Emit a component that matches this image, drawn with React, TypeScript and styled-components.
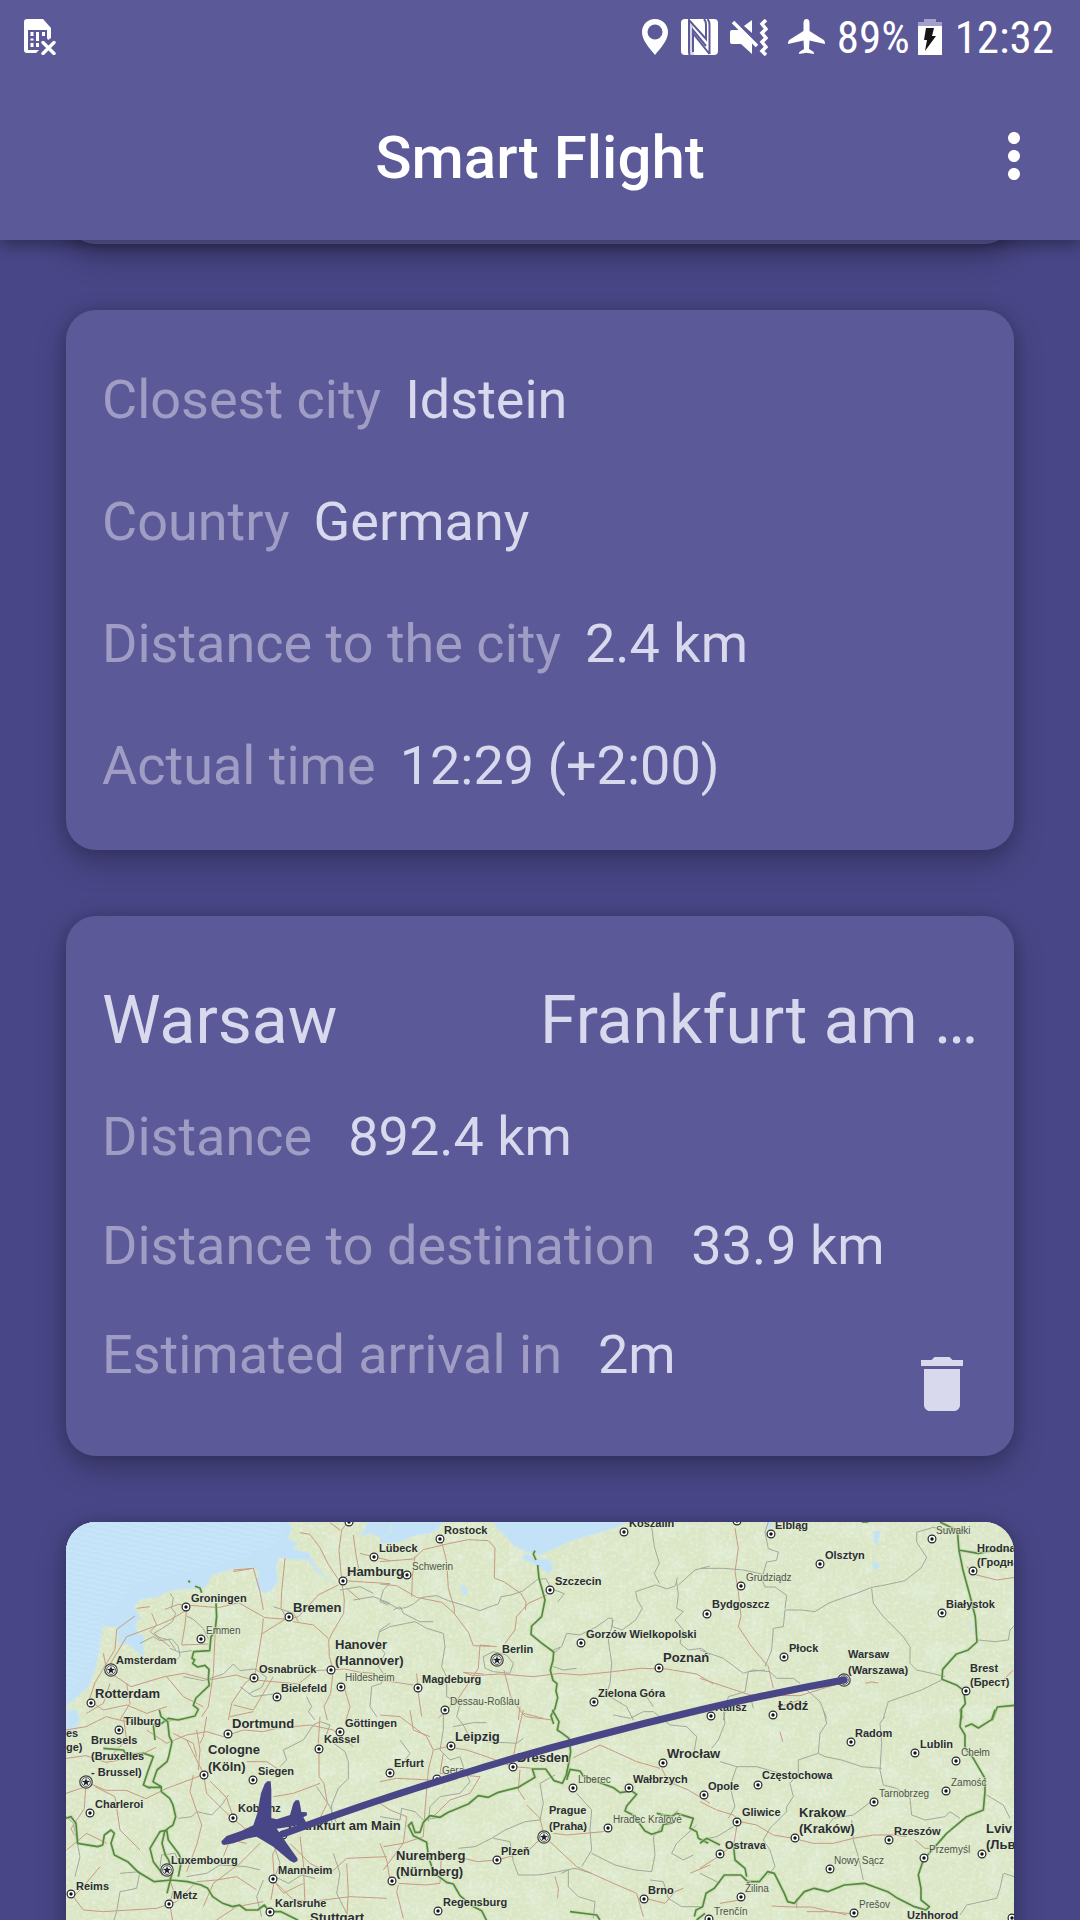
import React from 'react';
import styled, { createGlobalStyle } from 'styled-components';

const GlobalStyle = createGlobalStyle`
  *, *::before, *::after { box-sizing: border-box; }
  body {
    margin: 0;
    background: #484686;
    font-family: Roboto, 'Noto Sans', sans-serif;
  }
`;

const Screen = styled.div`
  display: flex;
  flex-direction: column;
  height: 100vh;
  overflow: hidden;
  background: #484686;
`;

const Header = styled.header`
  position: relative;
  z-index: 1;
  flex: none;
  background: #5c5999;
  color: #fff;
  box-shadow: 0 4px 16px rgba(0, 0, 0, 0.4);
`;

const StatusBar = styled.div`
  display: flex;
  align-items: center;
  justify-content: space-between;
  height: 72px;
  padding: 2px 26px 0 24px;
`;

const StatusGroup = styled.div`
  display: flex;
  align-items: center;
`;

const StatusIcon = styled.svg<{ $gap?: number }>`
  display: block;
  flex: none;
  margin-right: ${(p) => p.$gap ?? 0}px;
`;

const StatusText = styled.span<{ $gap?: number }>`
  padding-top: 2px;
  font-family: 'Roboto Condensed', 'Liberation Sans Narrow', Roboto, sans-serif;
  font-size: 45px;
  line-height: 70px;
  margin-right: ${(p) => p.$gap ?? 0}px;
`;

const AppBar = styled.div`
  display: grid;
  grid-template-columns: 72px 1fr 72px;
  align-items: center;
  height: 168px;
  padding: 0 30px;
`;

const Title = styled.h1`
  grid-column: 2;
  margin: 0;
  padding-top: 4px;
  font-size: 60px;
  font-weight: 500;
  line-height: 72px;
  text-align: center;
`;

const IconButton = styled.button`
  display: block;
  flex: none;
  width: 72px;
  height: 72px;
  padding: 0;
  border: 0;
  background: none;
  color: inherit;
  cursor: pointer;

  svg {
    display: block;
    width: 100%;
    height: 100%;
    fill: currentColor;
  }
`;

const Content = styled.main`
  display: flex;
  flex: 1;
  flex-direction: column;
  gap: 66px;
  min-height: 0;
  padding: 0 66px;
  overflow: hidden;
`;

const Card = styled.section`
  flex: none;
  border-radius: 30px;
  background: #5c5999;
  color: #d9d9ee;
  box-shadow: 0 12px 30px rgba(0, 0, 0, 0.26), 0 0 14px rgba(0, 0, 0, 0.14);
`;

const ScrolledCard = styled(Card)`
  height: 64px;
  margin-top: -60px;
`;

const PlaceCard = styled(Card)`
  padding: 29px 36px 23px;
`;

const FlightCard = styled(Card)`
  padding: 44px 36px 36px;
`;

const Facts = styled.dl`
  flex: 1;
  min-width: 0;
  margin: 0;
  font-size: 54px;
`;

const Fact = styled.div<{ $height: number; $gap: number }>`
  display: flex;
  gap: ${(p) => p.$gap}px;
  line-height: ${(p) => p.$height}px;
  white-space: nowrap;
`;

const Label = styled.dt`
  color: #a09dc5;
`;

const Value = styled.dd`
  margin: 0;
`;

const Route = styled.h2`
  display: flex;
  margin: 0;
  font-size: 66px;
  font-weight: 400;
  line-height: 122px;
`;

const City = styled.span`
  flex: 1;
  min-width: 0;
  white-space: nowrap;
`;

const FlightBody = styled.div`
  display: flex;
  align-items: flex-end;

  dl {
    padding-bottom: 11px;
  }
`;

const MapCard = styled(Card)`
  height: 540px;
  overflow: hidden;
  background: #dce7c4;
`;

const MapDrawing = styled.svg`
  display: block;
  width: 100%;
  font-family: 'Liberation Sans', Arial, sans-serif;
`;

type Size = 'sm' | 'md' | 'lg' | 'cap';

const MapLabel = styled.text<{ $size: Size }>`
  font-size: ${(p) => ({ sm: 10, md: 11, lg: 13, cap: 11 })[p.$size]}px;
  font-weight: ${(p) => (p.$size === 'sm' ? 400 : 700)};
  fill: ${(p) => (p.$size === 'sm' ? '#4e534b' : '#2b2e33')};
  stroke: rgba(226, 236, 206, 0.6);
  stroke-width: 2px;
  paint-order: stroke;
`;

// [size, marker x, marker y, then label x, label baseline, text ...]
type Place = [Size, number | null, number, ...Array<[number, number, string]>];

const places: Place[] = [
  ['md', 120, 85, [125, 80, 'Groningen']],
  ['sm', 135, 117, [140, 112, 'Emmen']],
  ['cap', 45, 148, [50, 142, 'Amsterdam']],
  ['lg', 25, 181, [29, 176, 'Rotterdam']],
  ['lg', 223, 95, [227, 90, 'Bremen']],
  ['md', 283, 0],
  ['md', 308, 35, [313, 30, 'Lübeck']],
  ['lg', 265, 148, [269, 127, 'Hanover'], [269, 143, '(Hannover)']],
  ['sm', 275, 165, [279, 159, 'Hildesheim']],
  ['md', 188, 156, [193, 151, 'Osnabrück']],
  ['md', 211, 175, [215, 170, 'Bielefeld']],
  ['md', 374, 17, [378, 12, 'Rostock']],
  ['lg', 277, 59, [281, 54, 'Hamburg']],
  ['sm', 341, 53, [346, 48, 'Schwerin']],
  ['md', 558, 10, [563, 5, 'Koszalin']],
  ['md', 484, 68, [489, 63, 'Szczecin']],
  ['md', 515, 121, [520, 116, 'Gorzów Wielkopolski']],
  ['cap', 431, 138, [436, 131, 'Berlin']],
  ['lg', 593, 146, [597, 140, 'Poznań']],
  ['md', 352, 166, [356, 161, 'Magdeburg']],
  ['md', 528, 180, [532, 175, 'Zielona Góra']],
  ['sm', 379, 188, [384, 183, 'Dessau-Roßlau']],
  ['md', 705, 12, [709, 7, 'Elbląg']],
  ['md', 671, -1],
  ['md', 754, 42, [759, 37, 'Olsztyn']],
  ['sm', 866, 17, [870, 12, 'Suwałki']],
  ['md', 907, 49, [911, 30, 'Hrodna'], [911, 44, '(Гродна)']],
  ['sm', 675, 64, [680, 59, 'Grudziądz']],
  ['md', 641, 92, [646, 86, 'Bydgoszcz']],
  ['md', 876, 91, [880, 86, 'Białystok']],
  ['md', 718, 135, [723, 130, 'Płock']],
  ['cap', 778, 158, [782, 136, 'Warsaw'], [782, 152, '(Warszawa)']],
  ['md', 900, 169, [904, 150, 'Brest'], [904, 164, '(Брест)']],
  ['md', 645, 194, [649, 189, 'Kalisz']],
  ['lg', 707, 193, [712, 188, 'Łódź']],
  ['md', 53, 208, [58, 203, 'Tilburg']],
  ['md', null, 0, [0, 215, 'es'], [0, 229, 'ge)']],
  ['cap', 20, 260, [25, 222, 'Brussels'], [25, 238, '(Bruxelles'], [25, 254, '- Brussel)']],
  ['lg', 162, 212, [166, 206, 'Dortmund']],
  ['lg', 138, 253, [142, 232, 'Cologne'], [142, 249, '(Köln)']],
  ['md', 187, 258, [192, 253, 'Siegen']],
  ['md', 274, 210, [279, 205, 'Göttingen']],
  ['md', 253, 227, [258, 221, 'Kassel']],
  ['md', 24, 291, [29, 286, 'Charleroi']],
  ['md', 167, 296, [172, 290, 'Koblenz']],
  ['lg', 217, 313, [222, 308, 'Frankfurt am Main']],
  ['cap', 101, 348, [105, 342, 'Luxembourg']],
  ['md', 5, 372, [10, 368, 'Reims']],
  ['md', 103, 382, [107, 377, 'Metz']],
  ['md', 207, 357, [212, 352, 'Mannheim']],
  ['md', 204, 390, [209, 385, 'Karlsruhe']],
  ['lg', null, 0, [244, 400, 'Stuttgart']],
  ['md', 324, 251, [328, 245, 'Erfurt']],
  ['lg', 326, 359, [330, 338, 'Nuremberg'], [330, 354, '(Nürnberg)']],
  ['lg', 385, 224, [389, 219, 'Leipzig']],
  ['sm', 371, 257, [376, 252, 'Gera']],
  ['lg', 447, 245, [451, 240, 'Dresden']],
  ['sm', 507, 266, [512, 261, 'Liberec']],
  ['md', 563, 266, [567, 261, 'Wałbrzych']],
  ['lg', 597, 241, [601, 236, 'Wrocław']],
  ['cap', 478, 315, [483, 292, 'Prague'], [483, 308, '(Praha)']],
  ['sm', 542, 306, [547, 301, 'Hradec Králové']],
  ['md', 431, 338, [435, 333, 'Plzeň']],
  ['md', 578, 377, [582, 372, 'Brno']],
  ['md', 372, 389, [377, 384, 'Regensburg']],
  ['md', 638, 273, [642, 268, 'Opole']],
  ['md', 785, 220, [789, 215, 'Radom']],
  ['md', 849, 231, [854, 226, 'Lublin']],
  ['sm', 890, 239, [895, 234, 'Chełm']],
  ['md', 692, 263, [696, 257, 'Częstochowa']],
  ['sm', 808, 280, [813, 275, 'Tarnobrzeg']],
  ['sm', 880, 269, [885, 264, 'Zamość']],
  ['md', 671, 300, [676, 294, 'Gliwice']],
  ['lg', 729, 316, [733, 295, 'Krakow'], [733, 311, '(Kraków)']],
  ['md', 823, 318, [828, 313, 'Rzeszów']],
  ['md', 654, 332, [659, 327, 'Ostrava']],
  ['sm', 858, 336, [863, 331, 'Przemyśl']],
  ['lg', 916, 332, [920, 311, 'Lviv'], [920, 327, '(Львів)']],
  ['sm', 764, 347, [768, 342, 'Nowy Sącz']],
  ['sm', 675, 375, [679, 370, 'Žilina']],
  ['sm', 643, 397, [648, 393, 'Trenčín']],
  ['sm', 788, 391, [793, 386, 'Prešov']],
  ['md', 946, 396, [841, 397, 'Uzhhorod']],
];

// The map lines come in six tiles, drawn at three units to the pixel.
type Tile = { x: number; y: number; sea?: string; region: string; road: string; border: string };

const tiles: Tile[] = [
  {
    x: -18, y: -36,
    sea: 'M0 0H670L695 55 685 85 712 100 700 118 745 128 765 165 790 195 815 215 770 185 745 150 700 148 655 142 648 180 655 210 640 235 615 250 595 240 590 215 597 185 575 172 515 178 455 195 440 225 425 240 400 235 330 242 290 262 240 268 222 290 240 322 225 345 235 370 252 378 250 440 205 402 178 402 170 350 125 350 118 410 108 470 85 530 18 590 0 600ZM900 80L925 36 990 36 990 95 960 80 930 70Z M18 600L60 640 18 680Z',
    region: 'M330 250l10 15-5 30 12 15-10 25-30 20-25 15 15 12 30 8 20 30M380 318l20 10 30 28 15 30M330 415l30 12 35-5M240 400l40-20 20 12 35-5 20 22 5 30-20 20M370 500l60 12 60-20 30-30 20 20 45-5 35 25-15 30-40 20M640 290l60 20 15 25M990 220l-20 20-10 35 25 10M840 240l60-10 40 20M740 560l15 30-10 15 20 25M990 340l-30 20-10 40 25 30-20 40 15 20-5 30-30 10-5 60 20 30M540 530l40 30 60-8M880 270l60-10 50 20',
    road: 'M845 60l-8 60 8 90 8 60-2 40-35 60-10 20 2 50 12 40-8 70-20 40 10 40M720 68l30 5 30 40 25 50 30 45M880 75l8 60 8 40-45 30M900 130l40 10 50 12M865 213l125 8M835 225l-60 30-60 65-30 8-70-5-80-45-60 15-120-10-40 15M610 325l-5 50-20 120-30 25-40 60-10 50M685 322l-80 50M700 335l60 10 45 40M860 235l40 35M675 145l-10 100-2 50 15 25M520 185l60-10 20 70 10 55M470 290l-5 90-5 110-15 100-20 30M380 295l-5 50-10 60 80-3M230 295l40-5M275 310l15 35-20 20 60 45M130 430l10 50 60-100 95-35 35-15 50-30M225 318l-55 40-5 60-30 50-30 50-20 60M153 490l60 40 100-30 60-10 75 20 80-15 50 15M585 510l130 12 50-40 90-5 45 10 45 3M100 580l30 20 70-15 60 25 60-20M320 500l50 60 60 30M200 520l10 60-30 50M520 180l60-5M840 60l-30-22M845 60l20-25M640 500l-60 100-60-15M855 540l15 50-15 50M150 520l-20 60-50 30',
    border: 'M385 212l5 5M405 229l15 5 5 14M468 280l2 40-5 45-12 15-4 42-48 3-5 20 8 4-6 12 15 10 22-5 12 12-2 30 3 18-40 38-8 22 15 12-10 20-50 12-30-5-20 15-25 5 5 45',
  },
  {
    x: 942, y: -36,
    sea: 'M35 36H190L170 60 150 70 110 75 60 95 20 100 0 100V85L30 70ZM340 36L355 60 375 75 400 105 440 125 480 135 580 90 700 55 745 36ZM425 145L440 130 465 145 510 150 520 175 505 190 470 165ZM240 225L255 230 265 250 250 255Z',
    region: 'M0 270l35 15 20 12 25-5 20-10 25-20 45-5 35 15 50 15 45 15 25-10 30-10 8-22 30-5 35-12 45-35 25-2 15 30 40 15-20 25M0 365l30-15 50-10 25-5 35 20 50 15 5 40-10 60 15 30 0 60 40 20-10 40 20 25 15 30M40 300l20-10 10 20 50 25 40 0M310 440l30-15 40 10 20 25-10 30-50-5-25-10zM520 420l25-10 15-40 40 5 50-25 35-25 12 0 0 25 30 10 40-30 20-35-15-25-5-25 60-20 35 12 25-10 5-25M815 50l8 60 15 50-15 30 15 30M890 215l5 40-5 40 20 10-25 25 25 30-10 40 25 20 40-5 25 20M895 225l50-45 45-12M540 415l-20 15M700 330l-15 60 10 70-5 60-10 30M690 560l50 30 20 40M520 470l30 10 40-5M800 560l20 30',
    road: 'M0 155l100-8 30-28 75-18 60-12 60 3 20 22-2 90 30 12 50 35 15 25-2 25M185 95l15 60 5 80 18 60 0 15M0 222l50 5 60 35 75 15 35 30 45 60 15 40 50 2M300 405l50 5M105 140l-8 60-2 60M375 400l30-40 5-40 35-40 55-25M300 405l-5 70-60 90-60 60M250 487l30 10 80-5 100 8 80-10 60 5 100-10 80-10 80 2 90 15 50 30M372 480l20 80 35 50 10 10 80 10M110 490l5 60 10 70M0 510l100 15M250 487l60 5M420 590l-5 40',
    border: 'M465 122l-5 10 8 18M473 165l4 40 10 35 8 30-10 50-30 28-2 25 30 25 38 28-2 25-8 30 8 30 12 10-3 22 5 20-8 32-12 22 8 25',
  },
  {
    x: 1902, y: -36,
    sea: 'M195 36H225L210 55ZM520 65L540 62 535 95 525 105ZM515 160L530 155 540 170 525 180ZM800 345L820 350 825 360Z',
    region: 'M205 36l-10 30 10 50 30 10-5 25-30 5-15 50 10 25 30 0 35 25-5 40M0 175l70 0 60 5 55 12M255 300l50 0 40 5 40-25 40-15 45-15 45-18 30-5 70-15 50-40 15-30-30-45 0-30 50-15 45 10M515 235l5 45 30 40 60 60 20 30 0 50 20 20 45 10 40 10M255 300l-5 50-30 5-5 65-20 50M0 420l70 25 60 45 30-10 50 5 20 20 50 0 20 15M195 480l-50 5-10 60-50 15-15 70M320 540l40 35 20 50M725 510l-60 30-100 35-15 50M835 390l50 5 40-5 5-30 20-20',
    road: 'M105 55l10 60-10 70 10 60 8 75-8 30 40 60 50 60 15 65M0 505l90 30 60 20 150 2 80-25 70-20M240 590l60-20M495 520l20-4 20 3M800 170l30 25 60 15 55-8M890 530l50-50M150 555l10 40',
    border: 'M720 36l30 15 22 10 5 60 12 60 22 80 15 60 5 75-28 25-35 12-40 45-2 30 45 18 20 15 5 40-15 20 5 20-5 10M775 120l60 10 40-8 60-2M485 36h20M942 586l-50 5-15 40',
  },
  {
    x: -18, y: 564,
    sea: 'M18 0H50L60 30 30 60 18 75Z',
    region: 'M0 300l40 40 20 100-15 60M355 325l40-5 15-15 45 10 30-30 20-30M660 170l20-20-10-30 60-30 30-45 20-10 30 10-15 40 20 10 40 30 10 30 0 50-30 30-20 50 0 60M180 490l60-5-10 50-50 10-10 60-10 30M640 400l20 60-15 40 40 20 40-25 40 10M300 470l5-35 40-5 15 35M380 500l60-10 40-25 80 5 40 10M770 230l40 60 20 50M610 510l-20 50 15 60M820 430l20 60-10 60 30 60',
    road: 'M18 60l60-10 60-30 60 15 70 10 100-20M18 145l60-8 60 20 90-15 60-30M78 216l-5 80-40 60 10 20M78 216l60 25 60 0 60 25 60-30 80-30 50-20M18 250l60-20M340 70l60 30 10 40M320 100l60-25 60-10 50 15 60-20 60 5 40-10 100-10 70 15 60 50M380 90l20 40 30 60 10 60 60 60 60 50M410 60l10 60-5 60M400 195l-10 50 35 100-15 60-30 80M520 323l-20-60-50-50M560 155l60 0 60 40M777 130l0 70 15 20 10 60-30 60M640 260l60-10 80-30M668 374l-30 60 5 75-10 60M240 420l-60-60-15-100-60-30M120 470l-50 60-30 30 30 40 60 5 160-10 60-20 60-60 60-5 60-10 60 40M330 585l10 60M320 480l20 60-10 40M140 150l60-60-10-70M320 100l-60-40M20 420l60-50 60 30M640 510l60 60 50 5 120-15 110 5M690 400l60 60 60 30 50-45 120-5M720 380l10 80 5 120M860 460l5 90-5 80M640 510l30 40 60-30M600 400l-60 60-80 60-30 70M470 630l60-40 80-15M780 20l-5 80M510 20l70-15M440 20l-10 60-10 20M560 400l-50-10-20 50',
    border: 'M298 0l5 20 20 15 5 45 8 15-10 45-5 15-30 25-12 35 25 15 0 15 25 20 10 20 8 35-8 25-15 10-10 10-8 35 10 35 10 15 10 40-15 60M270 235l-20-10 15-45 15-40-30-10-50 5-10-15-60-5M265 232h40M18 325l15-5 15 20 5 60 60 10 15-5 5-30 20-15 10 10-10 30 10 35 40 20 30 30 50 30 50-5 50 5 40 10 20 10 15 25 30 20 30 10 20-5 20 15 35 0 20-15 15 20 35 0 50 25-10 35M320 360l-20 5-30 50 10 40 30 40M320 360l5 30 30 40 10 20-10 50',
  },
  {
    x: 942, y: 564,
    region: 'M190 0l0 60-10 60 30 30 30-10 15 45 15 30-30 35-60 10-30 30-5 45M220 50l60-12 40 0M320 95l90 5 20-15M700 15l50 10 40-20 30 0 50 40 50 5 30 30-10 60M0 320l60 10 5-35 40 10 25 25 60-10M235 415l50-5 50-25 40-25 60-25 45-5 10-50-10-60 45-25M340 385l50 10 10 60 15 40 60 0 60-10 50-10 50 15M590 250l45 50-5 60 5 60-30 50M635 430l70 35 60 15 50 5 10-50-5-55 45-55 30-25M545 490l20-10 0 50 30 30 50 15-5 50M810 510l40 5 15 50 40 25 60 0M950 345l-60 55-15 30 35 20 30-15M870 230l20-20M70 500l40-30M60 90l30 40-15 20',
    road: 'M0 15l60 5 80 60 20 40 40-10 60 10 60 20 80 30 60 5M160 120l-15 60-10 120-5 80-60 20-60 10M190 130l-10 60 120 10-30 50-60 20-50 50M0 215l50-10 100 5M90 0l10 60 50 20M430 0l-10 40-20 100M430 10l60 15M420 180l-5 60 20 30M440 285l40 40 12 50-50 50-90 25-60 5-40-10M510 395l80 75 110 50 70 30 20 70M520 370l40 5 110-10 15-10M840 175l-70-20-110-50-80 38M845 175l20 40 60 25 65 40M525 500l10 35-2 30M55 525l-5 20 20 80M55 520l80 5 45-5 5-100M30 510l-10-60-20-50M0 280l30 20 50 20-10 80-60 80M795 565l60 15 30-35 25-10M930 490l60-25',
    border: 'M517 0l20 35-5 25 15 10 20 15 5 40-5 30-8 40-12 25-25-8-25-35-40 0 8 25-50 30-60 15-30 15-30-5-30 25-60 25-25 15-30-5-20 20-10 30-15 0-10-30-10 10 15 30 40 20 5 40 15 50 40 30 20 5 20 35 35 30 30 15 15 30M560 210l10-32 30 5 10 15 50 20 40 15 20 15 35-5 15 10-30 35-5 15 30 15 15 25 15 20 20 10 30-10 5-20 30-5M830 310l45 10 15-10 50 15-10 30 20 10 5 20 30 15M570 605l80 10 10 15M950 630l25-20',
  },
  {
    x: 1902, y: 564,
    region: 'M70 0l5 40-20 50-20 25M370 0l10 40-20 30-5 60 20 10 50 10 60 20 60 5M555 20l-15 20 5 60-5 80 10 45 40 10 40 30 5 50 40 15 60-10 15-15 30 20M355 130l-60 20 0 40-25 30 10 40-20 30 0 15-50 50-20 35 20 30 15 50-20 25M110 170l-20 60 15 60-20 35M60 155l50 15 60 0 70 20 30 15M520 270l-60 45-60 10-15 20-45 15M455 330l5 60 15 50 15 70M860 255l50 30 20 40M910 490l-10 45-10 30-90 20-20 30M0 390l50-10 50-30M0 490l60 30M290 565l0 30M942 500l-30-10',
    road: 'M0 275l50 25 50 15 20 20 50 10 50 30 60 10 60 15 60 0 60-15 60-10 60 0 40 5M112 340l-10 60-40 35-62 40M240 65l8 30M645 390l30 25 20 0M215 588l60 3 60 0 60 15 60 5M60 580l60-10M320 605l80 0 40 10',
    border: 'M785 0l-5 50 15 25 0 40 25 30 35 60 0 40-5 55-50 20-60 50-70 80-15 45 8 40 0 35 25 20-10 10-35-10-50-25-30-20-70-25-60 5-50 20-40-10-30 10-30 35-20-5-10-25-30-60-20-5-25 30-35 0-20-20-50 0-30 40-25 15-10 40-20 10-5 20M795 50l20-8 20 12 40-25 10-30M942 0M140 500l-5-25-30-25-5-50M0 400l20-15 40 20',
  },
];

function MapMarker({ x, y, capital }: { x: number; y: number; capital: boolean }) {
  if (capital) {
    return (
      <g transform={`translate(${x} ${y})`}>
        <circle r="6.200" fill="#e9ecdd" stroke="#3f4240" strokeWidth="1.200" />
        <circle r="4.400" fill="#f4f5ef" stroke="#3f4240" strokeWidth=".8" />
        <path d="M0-4l1 2.800 3 .1-2.400 1.800.9 2.800L0 1.900l-2.500 1.600.9-2.800L-4-1.100l3-.1z" fill="#1d222b" />
      </g>
    );
  }
  return (
    <g transform={`translate(${x} ${y})`}>
      <circle r="3.900" fill="#fff" stroke="#25282b" strokeWidth="1.200" />
      <circle r="1.700" fill="#111" />
    </g>
  );
}

function FlightMap() {
  return (
    <MapDrawing viewBox="0 0 948 540" role="img" aria-label="Flight route from Warsaw to Frankfurt am Main">
      <defs>
        <filter id="forest" x="0" y="0" width="100%" height="100%">
          <feTurbulence type="fractalNoise" baseFrequency=".05" numOctaves="5" seed="8" />
          <feColorMatrix values="0 0 0 0 .76  0 0 0 0 .86  0 0 0 0 .71  4 0 0 0 -1.900" />
        </filter>
        <filter id="meadow" x="0" y="0" width="100%" height="100%">
          <feTurbulence type="fractalNoise" baseFrequency=".3" numOctaves="2" seed="3" />
          <feColorMatrix values="0 0 0 0 .91  0 0 0 0 .93  0 0 0 0 .80  0 3 0 0 -1.300" />
        </filter>
        <pattern id="waves" width="12" height="5" patternUnits="userSpaceOnUse" patternTransform="rotate(12)">
          <rect width="12" height="5" fill="#c3e2f8" />
          <path d="M0 2q3-1.500 6 0t6 0" fill="none" stroke="#d8edfb" strokeWidth="1" />
        </pattern>
      </defs>
      <rect width="948" height="540" fill="#dae6c5" />
      <rect width="948" height="540" filter="url(#forest)" opacity=".5" />
      <rect width="948" height="540" filter="url(#meadow)" opacity=".4" />
      <g transform="scale(.33333)" fill="none" strokeLinejoin="round">
        {tiles.map((t, i) => (
          <g key={i} transform={`translate(${t.x} ${t.y})`}>
            {t.sea && <path d={t.sea} fill="#c3e2f8" stroke="#cfe6e6" strokeWidth="4" />}
            <path d={t.region} stroke="#a1a89c" strokeWidth="3" />
            <path d={t.road} stroke="#c79a84" strokeWidth="3" />
          </g>
        ))}
        {tiles.map((t, i) => (
          <g key={i} transform={`translate(${t.x} ${t.y})`}>
            <path d={t.border} stroke="#bcd6a4" strokeWidth="11" opacity=".5" />
            <path d={t.border} stroke="#55893f" strokeWidth="5" />
          </g>
        ))}
      </g>
      <path d="M0 0H215V20L160 42 70 60 40 90 34 130 0 175Z" fill="url(#waves)" opacity=".5" />
      {places.map(([size, x, y, ...labels], i) => (
        <g key={i}>
          {x !== null && <MapMarker x={x} y={y} capital={size === 'cap'} />}
          {labels.map(([lx, ly, text]) => (
            <MapLabel key={text} x={lx} y={ly} $size={size}>
              {text}
            </MapLabel>
          ))}
        </g>
      ))}
      <path
        d="M778 158Q706 171 634 188Q578 201 522 216Q460 232 399 251Q306 279 217 312"
        fill="none"
        stroke="#484686"
        strokeWidth="7"
        strokeLinecap="round"
      />
      <path
        transform="translate(-6 188) scale(.33333)"
        fill="#484686"
        d="M484 394L500 378 545 362 580 346 592 310 603 250 614 222 622 214 632 214 634 240 634 324 650 328 690 315 700 280 707 271 717 271 720 282 724 306 740 307 741 316 730 322 738 336 742 345 732 348 722 342 690 350 650 356 660 370 680 400 712 445 713 452 702 458 690 452 640 410 590 380 560 386 520 400 492 405 486 402Z"
      />
    </MapDrawing>
  );
}

const placeFacts: Array<[string, string]> = [
  ['Closest city', 'Idstein'],
  ['Country', 'Germany'],
  ['Distance to the city', '2.4 km'],
  ['Actual time', '12:29 (+2:00)'],
];

const flightFacts: Array<[string, string]> = [
  ['Distance', '892.4 km'],
  ['Distance to destination', '33.9 km'],
  ['Estimated arrival in', '2m'],
];

function FactList({ facts, height, gap }: { facts: Array<[string, string]>; height: number; gap: number }) {
  return (
    <Facts>
      {facts.map(([label, value]) => (
        <Fact key={label} $height={height} $gap={gap}>
          <Label>{label}</Label>
          <Value>{value}</Value>
        </Fact>
      ))}
    </Facts>
  );
}

export default function App() {
  return (
    <Screen>
      <GlobalStyle />
      <Header>
        <StatusBar>
          <StatusGroup>
            <StatusIcon width="33" height="36" viewBox="0 0 33 36" aria-hidden="true">
              <path fill="#fff" d="M3 0H19L27 9V19L24 21L23 19V11H4V31H15L12 34H3Q0 34 0 31V3Q0 0 3 0Z" />
              <path fill="#fff" d="M6.500 13h3v4h-3zM12 13h3v9h-3zM18 13h3v4h-3zM6.500 19.500h3v2h-3zM6.500 24h3v4h-3zM12 24h3v4h-3z" />
              <path d="M19 23.500l11 11M30 23.500l-11 11" stroke="#fff" strokeWidth="3.400" strokeLinecap="round" />
            </StatusIcon>
          </StatusGroup>
          <StatusGroup>
            <StatusIcon $gap={13} width="26" height="36" viewBox="0 0 26 36" aria-hidden="true">
              <path fill="#fff" fillRule="evenodd" d="M13 0C5.500 0 0 5.700 0 13c0 8.500 7.500 16 13 23 5.500-7 13-14.500 13-23C26 5.700 20.500 0 13 0zm0 5.500a7.500 7.500 0 110 15 7.500 7.500 0 010-15z" />
            </StatusIcon>
            <StatusIcon $gap={12} width="37" height="36" viewBox="0 0 37 36" aria-hidden="true">
              <rect width="37" height="36" rx="4" fill="#fff" />
              <path fill="#5c5999" d="M7.500 0.500L12 5.500V31Q12 34 13.500 36H9Q7.500 34 7.500 31Z" opacity=".25" />
              <path
                fill="none"
                stroke="#5c5999"
                strokeWidth="2"
                d="M8.500 36Q8 34 8 31V1L25 20V6Q25 2 23 0M28.500 35V6Q28.500 2 26.500 0M12 33V11L25 27M12.500 15L28.500 35"
              />
            </StatusIcon>
            <StatusIcon $gap={20} width="38" height="37" viewBox="0 0 38 37" aria-hidden="true">
              <path fill="#fff" d="M22 1V14L14 7Z" />
              <path fill="#fff" d="M0 13Q0 11 2 11H9L22 24V35L11 25H2Q0 25 0 23Z" />
              <path d="M3 3L27 27" stroke="#fff" strokeWidth="3.500" />
              <path d="M36 1l-4 4 4 5-4 4 4 5-4 4 4 5-4 4 4 4" fill="none" stroke="#fff" strokeWidth="3.500" />
            </StatusIcon>
            <StatusIcon $gap={12} width="37" height="36" viewBox="0 0 37 36" aria-hidden="true">
              <path fill="#fff" d="M18.500 0c2 0 3 1.500 3 4v8L35 20.500c1.500 1 2 2 2 4.500L21.500 21.500 21 30l4 2.500c1 .7 1 1.500 1 2.500l-7.500-1.200L11 35c0-1 0-1.800 1-2.500L16 30l-.5-8.500L0 25c0-2.500.5-3.500 2-4.500L15.500 12V4c0-2.500 1-4 3-4z" />
            </StatusIcon>
            <StatusText $gap={8}>89%</StatusText>
            <StatusIcon $gap={13} width="24" height="36" viewBox="0 0 24 36" aria-hidden="true">
              <path fill="#a3a0cb" d="M6 0h12v3h6v5H0V3h6z" />
              <path fill="#fff" d="M0 7h24v29H0z" />
              <path fill="#161616" d="M8 9h8l-2 8h4L7 32l2-11H6z" />
            </StatusIcon>
            <StatusText>12:32</StatusText>
          </StatusGroup>
        </StatusBar>
        <AppBar>
          <Title>Smart Flight</Title>
          <IconButton type="button" aria-label="More options">
            <svg viewBox="0 0 24 24" aria-hidden="true">
              <path d="M12 8c1.100 0 2-.9 2-2s-.9-2-2-2-2 .9-2 2 .9 2 2 2zm0 2c-1.100 0-2 .9-2 2s.9 2 2 2 2-.9 2-2-.9-2-2-2zm0 6c-1.100 0-2 .9-2 2s.9 2 2 2 2-.9 2-2-.9-2-2-2z" />
            </svg>
          </IconButton>
        </AppBar>
      </Header>
      <Content>
        <ScrolledCard />
        <PlaceCard>
          <FactList facts={placeFacts} height={122} gap={24} />
        </PlaceCard>
        <FlightCard>
          <Route>
            <City>Warsaw</City>
            <City>Frankfurt am …</City>
          </Route>
          <FlightBody>
            <FactList facts={flightFacts} height={109} gap={36} />
            <IconButton type="button" aria-label="Delete flight">
              <svg viewBox="0 0 24 24" aria-hidden="true">
                <path d="M6 19c0 1.100.9 2 2 2h8c1.100 0 2-.9 2-2V7H6v12zM19 4h-3.500l-1-1h-5l-1 1H5v2h14V4z" />
              </svg>
            </IconButton>
          </FlightBody>
        </FlightCard>
        <MapCard>
          <FlightMap />
        </MapCard>
      </Content>
    </Screen>
  );
}
